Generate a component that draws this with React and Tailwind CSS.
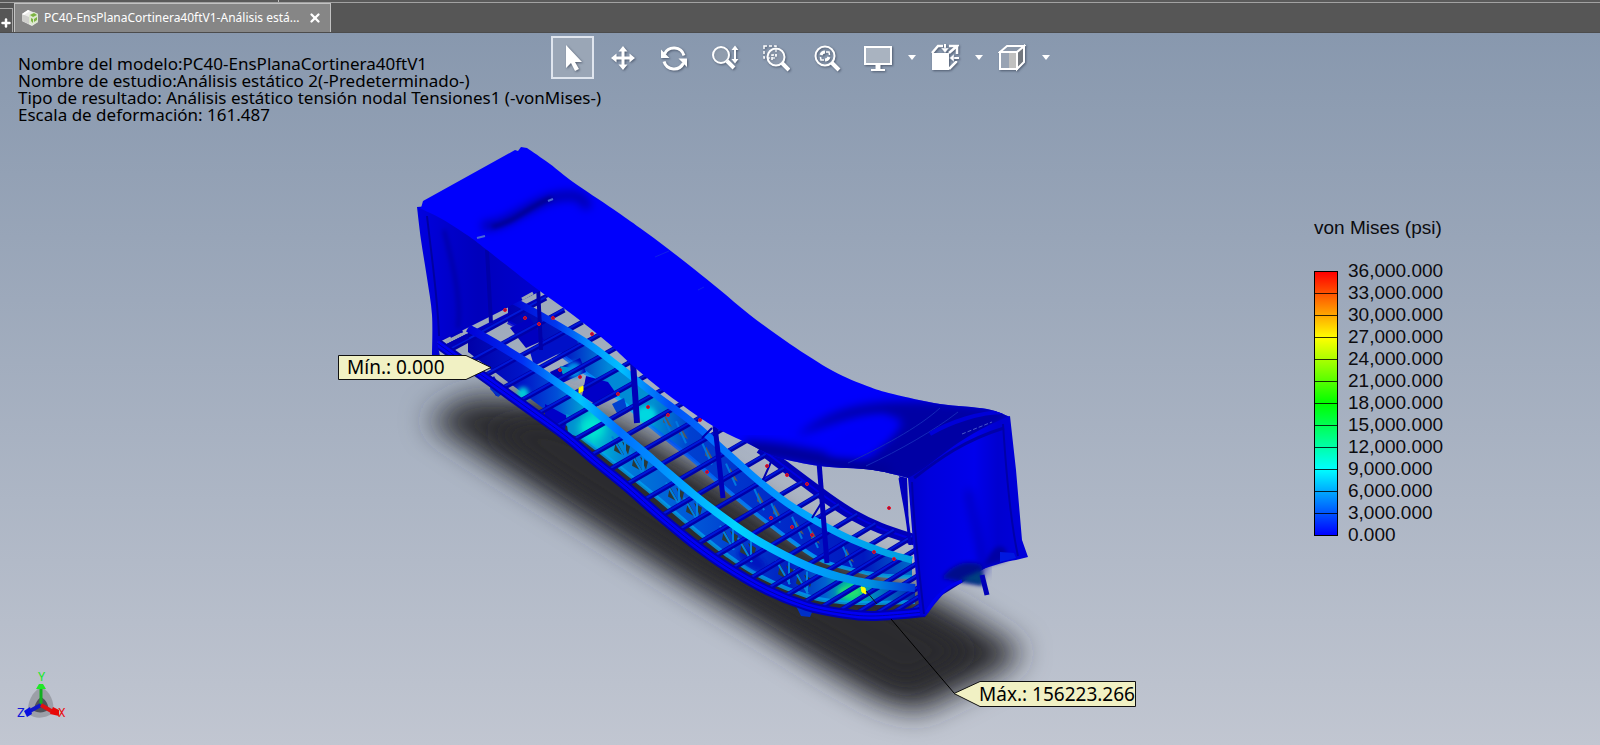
import React from 'react';
import { X, Plus } from 'lucide-react';

const legendValues = [
  '36,000.000',
  '33,000.000',
  '30,000.000',
  '27,000.000',
  '24,000.000',
  '21,000.000',
  '18,000.000',
  '15,000.000',
  '12,000.000',
  '9,000.000',
  '6,000.000',
  '3,000.000',
  '0.000',
];

const studyInfo = [
  'Nombre del modelo:PC40-EnsPlanaCortinera40ftV1',
  'Nombre de estudio:Análisis estático 2(-Predeterminado-)',
  'Tipo de resultado: Análisis estático tensión nodal Tensiones1 (-vonMises-)',
  'Escala de deformación: 161.487',
];

// Smooth path through a list of points
const spline = (pts, start = 'M') => {
  let d = `${start}${pts[0][0]} ${pts[0][1]}`;
  for (let i = 0; i < pts.length - 1; i++) {
    const p0 = pts[i - 1] || pts[i];
    const p1 = pts[i];
    const p2 = pts[i + 1];
    const p3 = pts[i + 2] || p2;
    d += ` C${p1[0] + (p2[0] - p0[0]) / 6} ${p1[1] + (p2[1] - p0[1]) / 6} ${p2[0] - (p3[0] - p1[0]) / 6} ${p2[1] - (p3[1] - p1[1]) / 6} ${p2[0]} ${p2[1]}`;
  }
  return d;
};

const band = (top, bottom) => `${spline(top)} ${spline([...bottom].reverse(), 'L')} Z`;

// y of a curve at a given x
const yAt = (pts, x) => {
  const i = Math.max(1, pts.findIndex((p) => p[0] >= x));
  const [a, b] = [pts[i - 1], pts[i]];
  return a[1] + ((b[1] - a[1]) * (x - a[0])) / (b[0] - a[0]);
};

const nearRail = [[437, 343], [480, 374], [533, 412], [567, 437], [595, 461], [627, 487], [660, 516], [693, 543], [727, 567], [767, 590], [807, 606], [840, 613], [873, 616], [925, 612]];
const farRail = [[760, 448], [780, 463], [827, 498], [853, 515], [880, 528], [915, 540]];
const beamA = [[468, 328], [500, 346], [540, 371], [580, 399], [613, 426], [653, 460], [693, 494], [727, 520], [760, 542], [807, 566], [840, 577], [873, 584], [915, 588]];
const beamALow = [[468, 352], [500, 376], [540, 406], [580, 436], [613, 462], [653, 494], [693, 528], [727, 555], [760, 576], [807, 596], [840, 602], [873, 603], [915, 602]];
const beamB = [[508, 298], [547, 319], [587, 343], [613, 362], [653, 393], [693, 423], [727, 453], [760, 482], [793, 507], [840, 534], [873, 548], [890, 554], [912, 560]];
const beamBLow = [[508, 322], [547, 345], [587, 374], [613, 394], [653, 428], [693, 460], [727, 490], [760, 517], [793, 542], [823, 561], [867, 573], [890, 576], [912, 577]];

const roofTop = [[527, 148], [550, 164], [573, 182], [613, 209], [640, 228], [667, 248], [694, 269], [720, 290], [750, 315], [790, 344], [833, 371], [867, 386], [893, 394], [940, 404], [987, 409], [1010, 417]];
const roofLow = [[417, 207], [440, 218], [467, 235], [487, 250], [533, 286], [573, 315], [607, 342], [633, 366], [667, 394], [713, 426], [747, 443], [777, 457], [820, 466], [873, 470], [912, 479]];

const joists = Array.from({ length: 27 }, (_, i) => {
  const x = 448 + i * 17.7;
  return { x, y: yAt(nearRail, x), dx: 98 + i * 0.6, dy: -53 - i * 0.7 };
});

const trusses = [616, 634, 670, 688, 724, 742, 780, 798];
const farTrusses = [664, 680, 706, 730, 758, 774, 796, 812, 846];

const redNodes = [
  [505, 310], [525, 318], [553, 318], [539, 324], [592, 334], [560, 370], [580, 377], [618, 394], [648, 407], [668, 415],
  [700, 420], [707, 472], [767, 466], [787, 475], [807, 484], [771, 518], [792, 527], [812, 535], [889, 508], [874, 552], [894, 559],
];

const Model = () => (
  <svg
    viewBox="0 33 1600 712"
    className="absolute inset-0 h-full w-full"
    role="img"
    aria-label="Análisis estático"
  >
    <defs>
      <filter id="blurShadow" x="-20%" y="-20%" width="140%" height="140%"><feGaussianBlur stdDeviation="15" /></filter>
      <filter id="blurSoft" x="-50%" y="-50%" width="200%" height="200%"><feGaussianBlur stdDeviation="5" /></filter>
      <filter id="blurWide" x="-50%" y="-50%" width="200%" height="200%"><feGaussianBlur stdDeviation="11" /></filter>
      <filter id="blurFine" x="-50%" y="-50%" width="200%" height="200%"><feGaussianBlur stdDeviation="2" /></filter>
      <linearGradient id="flangeA" gradientUnits="userSpaceOnUse" x1="468" y1="0" x2="915" y2="0">
        <stop offset="0" stopColor="#0000d8" />
        <stop offset="0.12" stopColor="#0030f4" />
        <stop offset="0.2" stopColor="#0090ff" />
        <stop offset="0.25" stopColor="#00c4ff" />
        <stop offset="0.34" stopColor="#0070ff" />
        <stop offset="0.45" stopColor="#0098ff" />
        <stop offset="0.6" stopColor="#00d4ff" />
        <stop offset="0.76" stopColor="#00a0ff" />
        <stop offset="0.9" stopColor="#0090e0" />
        <stop offset="1" stopColor="#0038d8" />
      </linearGradient>
      <linearGradient id="flangeB" gradientUnits="userSpaceOnUse" x1="508" y1="0" x2="912" y2="0">
        <stop offset="0" stopColor="#0000d0" />
        <stop offset="0.12" stopColor="#0038f0" />
        <stop offset="0.2" stopColor="#0090ff" />
        <stop offset="0.28" stopColor="#00c0ff" />
        <stop offset="0.4" stopColor="#0050f8" />
        <stop offset="0.6" stopColor="#0088ff" />
        <stop offset="0.75" stopColor="#00a8ff" />
        <stop offset="1" stopColor="#00a0e0" />
      </linearGradient>
      <linearGradient id="webA" gradientUnits="userSpaceOnUse" x1="468" y1="0" x2="915" y2="0">
        <stop offset="0" stopColor="#0000a8" />
        <stop offset="0.12" stopColor="#0014c8" />
        <stop offset="0.2" stopColor="#0050d8" />
        <stop offset="0.28" stopColor="#00c0d0" />
        <stop offset="0.36" stopColor="#0078d8" />
        <stop offset="0.5" stopColor="#0058d8" />
        <stop offset="0.6" stopColor="#0040d0" />
        <stop offset="0.72" stopColor="#0020c0" />
        <stop offset="0.8" stopColor="#0060d0" />
        <stop offset="0.86" stopColor="#00d090" />
        <stop offset="0.91" stopColor="#0080c0" />
        <stop offset="1" stopColor="#0028b8" />
      </linearGradient>
      <linearGradient id="webB" gradientUnits="userSpaceOnUse" x1="508" y1="0" x2="912" y2="0">
        <stop offset="0" stopColor="#0000b0" />
        <stop offset="0.14" stopColor="#0018c4" />
        <stop offset="0.25" stopColor="#0088d8" />
        <stop offset="0.36" stopColor="#0090d0" />
        <stop offset="0.45" stopColor="#0040d0" />
        <stop offset="0.7" stopColor="#0028c8" />
        <stop offset="0.88" stopColor="#0018c0" />
        <stop offset="1" stopColor="#0068c8" />
      </linearGradient>
      <linearGradient id="endWall" gradientUnits="userSpaceOnUse" x1="417" y1="0" x2="540" y2="0">
        <stop offset="0" stopColor="#0000e0" />
        <stop offset="0.3" stopColor="#0000c8" />
        <stop offset="0.5" stopColor="#0000bc" />
        <stop offset="1" stopColor="#0000d0" />
      </linearGradient>
      <linearGradient id="frontWall" gradientUnits="userSpaceOnUse" x1="910" y1="0" x2="1027" y2="0">
        <stop offset="0" stopColor="#0000cc" />
        <stop offset="0.15" stopColor="#0000dc" />
        <stop offset="0.55" stopColor="#0000ec" />
        <stop offset="0.75" stopColor="#0000d0" />
        <stop offset="1" stopColor="#0000dc" />
      </linearGradient>
      <clipPath id="roofClip">
        <path d={band([[417, 207], [424, 200], [515, 150], ...roofTop], roofLow)} />
      </clipPath>
    </defs>

    {/* Ground shadow */}
    <path
      d="M426 420 L480 456 L560 506 L690 588 L760 630 L830 674 L880 702 L918 712 L960 692 L1006 668 L1024 652 L1000 636 L950 606 L880 572 L800 534 L740 492 L680 456 L625 424 L560 400 L470 396 Z"
      fill="#2a2b2e"
      filter="url(#blurShadow)"
    />
    <path
      d="M490 430 L570 484 L700 568 L800 626 L905 684 L970 652 L900 612 L800 566 L700 500 L620 450 L540 420 Z"
      fill="#2a2b2e"
      filter="url(#blurWide)"
    />

    {/* Far rail and beam webs */}
    <path d={spline(farRail)} fill="none" stroke="#0000b8" strokeWidth="11" />
    <path d={spline(farRail)} fill="none" stroke="#0000e0" strokeWidth="2" />
    <path d="M437 341 L540 289 M445 347 L548 295" stroke="#0000c0" strokeWidth="4" />
    <path d={band(beamB, beamBLow)} fill="url(#webB)" />
    <path d={spline(beamBLow)} fill="none" stroke="url(#flangeB)" strokeWidth="4" opacity="0.8" />
    {farTrusses.map((x) => {
      const y = yAt(beamB, x);
      return (
        <g key={x}>
          <path d={`M${x} ${y + 12} l8 14 l-9 -5 Z`} fill="#55585c" />
          <path d={`M${x - 4} ${y + 8} l10 22`} stroke="#0078e0" strokeWidth="2" />
        </g>
      );
    })}

    {/* Suspension parts between the beams */}
    <path d="M510 328 l20 -10 l14 22 l-18 8 Z" fill="#0000c0" />
    <path d="M530 352 l44 -20 l4 12 l-44 22 Z" fill="#0010c8" />
    <path d="M550 372 l30 -14 l6 14 l-30 14 Z" fill="#0000b8" />
    <path d="M586 376 l22 6 l10 14 l-20 10 l-16 -10 Z" fill="#0000c8" />
    <path d="M612 404 l12 -6 l4 14 l-9 5 Z" fill="#0040d0" />
    <path d="M560 366 l12 2 l4 6 l-12 4 Z" fill="#0098c8" />

    <path d={band(beamA, beamALow)} fill="url(#webA)" />
    <path d={spline(beamALow.slice(3))} fill="none" stroke="#00a0f0" strokeWidth="4" opacity="0.8" />
    <path d="M494 376 l10 18 l-8 2 l-8 -12 Z M545 404 l22 12 l-2 14 l-20 -10 Z" fill="#0000c8" />
    <path d="M566 414 l14 4 l4 20 l-16 -4 Z" fill="#0090d0" />
    <ellipse cx="523" cy="394" rx="6" ry="7" fill="#00c8d8" filter="url(#blurFine)" />
    <ellipse cx="592" cy="428" rx="13" ry="12" fill="#00e8d0" filter="url(#blurSoft)" />
    <ellipse cx="574" cy="370" rx="8" ry="8" fill="#0090e8" filter="url(#blurFine)" />
    <ellipse cx="646" cy="415" rx="10" ry="9" fill="#00d8e0" filter="url(#blurFine)" />
    <ellipse cx="850" cy="592" rx="12" ry="6" fill="#20e070" filter="url(#blurFine)" />
    <ellipse cx="752" cy="560" rx="16" ry="7" fill="#0018c0" filter="url(#blurFine)" transform="rotate(34 752 560)" />
    {trusses.map((x) => {
      const y = yAt(beamA, x);
      return (
        <g key={x}>
          <path d={`M${x} ${y + 12} l9 16 l-11 -6 Z M${x + 6} ${y + 13} l8 5 l-2 8 Z`} fill="#2b3a38" />
          <path d={`M${x - 4} ${y + 8} l14 24 M${x + 9} ${y + 10} l0 22`} stroke="#0080e0" strokeWidth="2" />
        </g>
      );
    })}

    {/* Floor joists */}
    {joists.map(({ x, y, dx, dy }) => (
      <g key={x}>
        <path d={`M${x} ${y} l${dx} ${dy}`} stroke="#0000a8" strokeWidth="5" />
        <path d={`M${x} ${y - 1} l${dx} ${dy}`} stroke="#0018d8" strokeWidth="2" />
      </g>
    ))}
    <path d="M448 346 l20 -10 M450 336 l12 -6" stroke="#0000b8" strokeWidth="5" />

    {/* Flanges and near rail */}
    <path d={spline(beamB)} fill="none" stroke="url(#flangeB)" strokeWidth="7" />
    <path d={spline(beamA)} fill="none" stroke="url(#flangeA)" strokeWidth="8" />
    <path d="M492 384 l10 10 l-4 3 l-8 -8 Z M795 604 l18 6 l-3 7 l-9 -1 Z" fill="#0030c8" />
    <path d={spline(nearRail)} fill="none" stroke="#0000b0" strokeWidth="10" />
    <path d={spline(nearRail)} fill="none" stroke="#0000f4" strokeWidth="6" />
    <path d={spline(nearRail)} fill="none" stroke="#0000a8" strokeWidth="1" />

    {/* Posts */}
    <path d="M538 286 L541 350" stroke="#0000a8" strokeWidth="4" />
    <path d="M633 362 L637 423" stroke="#0000b8" strokeWidth="6" />
    <path d="M715 426 L723 498" stroke="#0000b8" strokeWidth="5" />
    <path d="M819 462 L827 563" stroke="#0000b8" strokeWidth="5" />
    <path d="M712 428 l-10 10 M771 462 l-8 18 M822 502 l-10 16" stroke="#0000b0" strokeWidth="2" />

    {/* Rear wall */}
    <path
      d={`${spline([[417, 207], [421, 240], [427, 278], [432, 315], [432, 356]])} L440 356 L437 342 L542 290 L533 278 L487 240 L467 224 L430 206 Z`}
      fill="url(#endWall)"
    />
    <path d="M427 216 C432 260 438 300 439 336" fill="none" stroke="#0000a0" strokeWidth="2" />
    <path d="M487 250 L491 323" stroke="#0000a8" strokeWidth="4" />
    <path d="M444 230 C452 260 462 300 458 328" fill="none" stroke="#0000a8" strokeWidth="4" filter="url(#blurFine)" />
    <path d="M446 342 L462 334 M522 299 L533 293" stroke="#9aa5b4" strokeWidth="3" />

    {/* Roof */}
    <path
      d={`M417 207 L421 208 L423 201 L515 150 L518 151 L521 147 ${spline(roofTop, 'L')} ${spline([...roofLow].reverse(), 'L')} Z`}
      fill="#0000fc"
    />
    <g clipPath="url(#roofClip)">
      <path d="M482 226 C510 226 530 202 556 197 S584 200 588 208" fill="none" stroke="#0000a8" strokeWidth="9" filter="url(#blurSoft)" />
      <path d="M492 227 C516 222 532 204 552 198" fill="none" stroke="#00007c" strokeWidth="3" filter="url(#blurFine)" />
      <path d="M796 436 C830 410 860 398 940 402 L1020 410 L912 485 L850 475 C884 446 902 428 886 415 C856 412 830 425 796 436 Z" fill="#0000a4" filter="url(#blurSoft)" />
      <path d="M745 448 C790 450 830 462 890 474" fill="none" stroke="#000098" strokeWidth="16" filter="url(#blurSoft)" />
      <ellipse cx="864" cy="436" rx="40" ry="13" fill="#0000f8" filter="url(#blurSoft)" transform="rotate(-22 864 436)" />
      <path d="M848 463 C880 448 918 428 940 408 M866 466 C900 450 935 430 958 412" fill="none" stroke="#1428b8" strokeWidth="1" />
      <path d="M930 434 C950 422 980 412 1004 412" fill="none" stroke="#0000d8" strokeWidth="4" />
      <path d="M962 434 L992 422" stroke="#4858c8" strokeWidth="1" strokeDasharray="4 2" />
    </g>
    <path d="M477 238 l8 -2 M548 201 l5 -2" stroke="#4a68d8" strokeWidth="2" />
    <path d="M655 257 l14 -6 M698 290 l6 -3" stroke="#1020e8" strokeWidth="1" />

    {/* Front wall */}
    <path d="M899 476 L909 530 L907 478 Z" fill="#0000b8" />
    <path d="M900 478 C904 505 908 515 910 545" fill="none" stroke="#0000c0" strokeWidth="3" />
    <path
      d="M908 478 C935 465 950 440 1010 416 L1016 470 L1022 540 L1028 557 L1016 560 C1000 562 960 575 945 592 C936 602 930 610 926 616 L920 615 C915 570 912 530 908 478 Z"
      fill="url(#frontWall)"
    />
    <path d="M914 478 C940 458 965 440 1004 428" fill="none" stroke="#0000a8" strokeWidth="3" />
    <path d="M912 482 C914 530 920 580 924 614" fill="none" stroke="#0000a8" strokeWidth="2" />
    <path d="M1003 424 C1006 470 1010 520 1018 556" fill="none" stroke="#0000a8" strokeWidth="2" />
    <path d="M968 490 C976 530 982 550 984 574" fill="none" stroke="#0000b0" strokeWidth="5" filter="url(#blurSoft)" />
    <path d="M984 566 C990 552 998 540 1006 550 L1006 560 Z" fill="#0000a4" filter="url(#blurFine)" />
    <path d="M942 578 C955 560 975 560 982 566 L983 585 L962 582 Z" fill="#00108c" filter="url(#blurFine)" />
    <path d="M960 580 L981 570 L983 585 Z" fill="#004080" filter="url(#blurFine)" />
    <path d="M1000 552 L1014 553 L1016 558 L1000 562 Z" fill="#0018e0" />
    <path d="M982 575 L987 595" stroke="#0000b8" strokeWidth="5" />
    <path d="M927 612 C935 595 950 585 962 581" fill="none" stroke="#0000f0" strokeWidth="3" />

    {/* Node markers */}
    {redNodes.map(([x, y]) => (
      <circle key={`${x}-${y}`} cx={x} cy={y} r="1.5" fill="#801050" stroke="#f01020" strokeWidth="1" />
    ))}
    <path d="M579 388 l4 -2 v5 l-4 2 Z M861 587 l4 1 l1 6 l-4 -2 Z" fill="#ffff00" stroke="#ffff00" />

    {/* Callouts */}
    <path d="M866 591 L877 604" stroke="#101820" strokeWidth="1" />
    <path d="M891 619 L954 693" stroke="#000" strokeWidth="1" />
    <path d="M338.500 355.500 H466 L491 367.500 L466 379.500 H338.500 Z" fill="#f1f1c4" stroke="#111" />
    <path d="M1135.500 681.500 H980 L954 693.500 L980 706.500 H1135.500 Z" fill="#f1f1c4" stroke="#111" />
    <text x="347" y="374" className="fill-black font-['Noto_Sans',sans-serif] text-[19px]">Mín.: 0.000</text>
    <text x="979" y="701" className="fill-black font-['Noto_Sans',sans-serif] text-[19px]">Máx.: 156223.266</text>
  </svg>
);

const Triad = () => (
  <svg viewBox="0 0 60 60" className="absolute bottom-3.5 left-3 h-[60px] w-[60px]" role="img" aria-label="Ejes XYZ">
    <path d="M29 16 C38 20 43 31 41 42 C33 48 23 48 16 43 C15 31 20 21 29 16 Z" fill="#8d9097" opacity="0.7" />
    <path d="M29 26 C34 29 37 34 36 39 C32 42 26 42 22 40 C22 34 25 29 29 26 Z" fill="#3c3f45" opacity="0.8" />
    <path d="M29 35 V18" stroke="#10b020" strokeWidth="3" />
    <path d="M24 18 L27 13 H31 L34 18 Z" fill="#20e828" />
    <path d="M29 34 L16 41" stroke="#1018c8" strokeWidth="4" />
    <path d="M18 36 L20 43 L15 46 L12 40 Z" fill="#0810e0" />
    <path d="M29 34 L41 41" stroke="#e01010" strokeWidth="4" />
    <path d="M41 36 L47 39 V45 L38 43 Z" fill="#e80808" />
    <text x="26" y="10" className="fill-[#20e828] font-['Roboto',sans-serif] text-[12px]">Y</text>
    <text x="5" y="46" className="fill-[#1018d8] font-['Roboto',sans-serif] text-[13px]">Z</text>
    <text x="46" y="46" className="fill-[#e81010] font-['Roboto',sans-serif] text-[12px]">X</text>
  </svg>
);

const Icon = ({ children }) => (
  <svg
    viewBox="0 0 28 28"
    className="h-7 w-7 drop-shadow-[1px_1px_1px_rgba(40,50,70,0.6)]"
    fill="none"
    stroke="#fff"
    strokeWidth="2"
    aria-hidden="true"
  >
    {children}
  </svg>
);

const tools = [
  {
    label: 'Seleccionar',
    active: true,
    icon: <path d="M8 1 V24 L13 19 L17 27 L21 25 L17 18 H24 Z" fill="#fff" stroke="none" />,
  },
  {
    label: 'Trasladar',
    icon: (
      <>
        <path d="M14 5 V23 M5 14 H23" strokeWidth="3" />
        <path d="M14 2 L18.500 7.500 H9.500 Z M14 26 L18.500 20.500 H9.500 Z M2 14 L7.500 9.500 V18.500 Z M26 14 L20.500 9.500 V18.500 Z" fill="#fff" stroke="none" />
      </>
    ),
  },
  {
    label: 'Girar',
    icon: (
      <>
        <path d="M4.500 10 A10.500 10.500 0 0 1 24 11.500 M23.500 19 A10.500 10.500 0 0 1 4 17.500" strokeWidth="3" />
        <path d="M1 5.500 V14 H9.500 Z M27 23 V14.500 H18.500 Z" fill="#fff" stroke="none" />
      </>
    ),
  },
  {
    label: 'Acercar o alejar',
    icon: (
      <>
        <circle cx="10" cy="11" r="8" fill="#b4bfcc" fillOpacity="0.5" />
        <path d="M16 17 L23 24" strokeWidth="4" />
        <path d="M24 5 V17" />
        <path d="M24 1.500 L27.500 6 H20.500 Z M24 19.500 L27.500 15 H20.500 Z" fill="#fff" stroke="none" />
      </>
    ),
  },
  {
    label: 'Zoom encuadre',
    icon: (
      <>
        <path d="M2 2 H14 V14 H2 Z" strokeDasharray="3 2" strokeWidth="1.500" />
        <circle cx="14" cy="13" r="8.500" fill="#b4bfcc" fillOpacity="0.4" />
        <path d="M10 16 V11 H15" strokeWidth="1.500" strokeDasharray="3 1" />
        <path d="M20 19 L27 26" strokeWidth="4" />
      </>
    ),
  },
  {
    label: 'Zoom para ajustar',
    icon: (
      <>
        <circle cx="12" cy="12" r="9.500" />
        <path d="M8 11 A4.500 4.500 0 0 1 12 8 M16 13 A4.500 4.500 0 0 1 12 16" strokeWidth="3" />
        <path d="M7.500 13 L8 16 L11 16 M16.500 11 L16 8 L13 8" strokeWidth="1.500" />
        <path d="M18.500 18.500 L26 26" strokeWidth="4" />
      </>
    ),
  },
  {
    label: 'Configuración de visualización',
    menu: true,
    icon: (
      <>
        <path d="M1 3 H27 V20 H1 Z" fill="#a9b3c0" />
        <path d="M14 20 V25" strokeWidth="5" />
        <path d="M7 26 H21" strokeWidth="2" />
      </>
    ),
  },
  {
    label: 'Orientación de vista',
    menu: true,
    icon: (
      <>
        <path d="M1 9 H18 V26 H1 Z" fill="#fff" stroke="none" />
        <path d="M1 9 L7 2 H12 M18 9 L26 2 H18 M18 25 L25 18 V17 M26 2 V10" strokeWidth="2.500" />
        <path d="M14 0 V6 M28 14 H22" />
        <path d="M10 4 H18 L14 9 Z M23 10 V18 L18.500 14 Z" fill="#fff" stroke="#8797ad" strokeWidth="0.500" />
      </>
    ),
  },
  {
    label: 'Estilo de visualización',
    menu: true,
    icon: (
      <>
        <path d="M2 8 H19 V25 H2 Z" fill="#98a3b3" />
        <path d="M11 9 H18 V24 H11 Z" fill="#c0c0bf" stroke="none" />
        <path d="M19 8 L26 2 V18 L19 25 Z" fill="#72777e" />
        <path d="M2 8 L9 2 H26 L19 8 Z" fill="#8b98aa" />
      </>
    ),
  },
];

const ToolBar = () => (
  <div role="toolbar" aria-label="Ver" className="flex items-center justify-center pl-2 pt-[3px]">
    {tools.map(({ label, active, icon, menu }) => (
      <div key={label} className={menu ? 'flex items-center' : 'mr-2 flex items-center'}>
        <button
          type="button"
          title={label}
          aria-label={label}
          className={
            active
              ? 'flex h-[43px] w-[43px] items-center justify-center border-2 border-[#dfe5ee] bg-[#9aa6b6]'
              : 'flex h-[43px] w-[43px] items-center justify-center'
          }
        >
          <Icon>{icon}</Icon>
        </button>
        {menu && (
          <button type="button" aria-label={`${label}, opciones`} className="flex h-[43px] w-6 items-center justify-center">
            <svg viewBox="0 0 8 5" className="h-[5px] w-2" aria-hidden="true">
              <path d="M0 0 H8 L4 5 Z" fill="#fff" />
            </svg>
          </button>
        )}
      </div>
    ))}
  </div>
);

const TabBar = () => (
  <header className="flex h-[33px] flex-col border-b border-[#4c4c4c] bg-[#565656]">
    <div className="h-[3px] border-b border-[#a2a2a2] bg-[#5a5a5a]">
      <div className="h-[2px] w-[279px] border-r border-[#c0c0c0]" />
    </div>
    <div className="flex flex-1 items-end">
      <button
        type="button"
        aria-label="Nueva pestaña"
        className="flex h-6 w-[13px] items-center justify-start border-r border-t border-[#a8a8a8] pt-1 text-white"
      >
        <Plus className="h-3 w-3 shrink-0" strokeWidth={5} />
      </button>
      <div className="ml-px flex h-[29px] w-[317px] items-center border border-b-0 border-[#c2c2c2] bg-[#868686] pl-1.5 pr-2">
        <svg viewBox="0 0 18 18" className="h-[18px] w-[18px] shrink-0" aria-hidden="true">
          <path d="M1 5 L7 1 L17 5 V13 L11 17 L1 12 Z" fill="#ececea" />
          <path d="M1 5 L8 8 V15 L1 12 Z" fill="#cfcfcc" />
          <path d="M8 6 L13 3 L17 5 V13 L11 16 L8 14 Z" fill="#dce8cf" />
          <path d="M9 6 L13 4 L16 6 L12 8 Z M10 9 L12 10 V14 L10 12 Z M13 10 L16 8 V11 L13 13 Z" fill="#7cb342" />
          <path d="M1 5 L7 1 L9 2 L3 6 Z" fill="#fff" />
        </svg>
        <span className="ml-[5px] flex-1 truncate font-['Noto_Sans',sans-serif] text-[12px] text-white">
          PC40-EnsPlanaCortinera40ftV1-Análisis está...
        </span>
        <button type="button" aria-label="Cerrar" className="ml-2 text-white">
          <X className="h-3.5 w-3.5" strokeWidth={4} />
        </button>
      </div>
    </div>
  </header>
);

const Legend = () => (
  <section className="absolute right-[156px] top-[185px] w-[130px] font-['Liberation_Sans',sans-serif] text-[19px] text-[#0c0c10]">
    <h2 className="whitespace-nowrap leading-5">von Mises (psi)</h2>
    <div className="mt-[22px] flex gap-2.5">
      <div className="mt-[11px] flex h-[265px] w-6 flex-col border border-black bg-[linear-gradient(to_bottom,#ff0000,#ffff00_25%,#00ff00_50%,#00ffff_75%,#0000ff)]">
        {legendValues.slice(1).map((value) => (
          <div key={value} className="flex-1 border-b border-black/80 last:border-b-0" />
        ))}
      </div>
      <ul>
        {legendValues.map((value) => (
          <li key={value} className="h-[22px] leading-[22px]">{value}</li>
        ))}
      </ul>
    </div>
  </section>
);

const App = () => {
  return (
    <div className="flex min-h-screen flex-col">
      <TabBar />
      <main className="relative flex-1 overflow-hidden bg-linear-to-b from-[#8898ae] to-[#c1c6d1]">
        <Model />
        <div className="relative">
          <ToolBar />
        </div>
        <div className="absolute left-[18px] top-[22px] font-['Noto_Sans',sans-serif] text-[17px] leading-[17px] text-black">
          {studyInfo.map((line) => (
            <p key={line} className="whitespace-nowrap">{line}</p>
          ))}
        </div>
        <Legend />
        <Triad />
      </main>
    </div>
  );
};

export default App;
